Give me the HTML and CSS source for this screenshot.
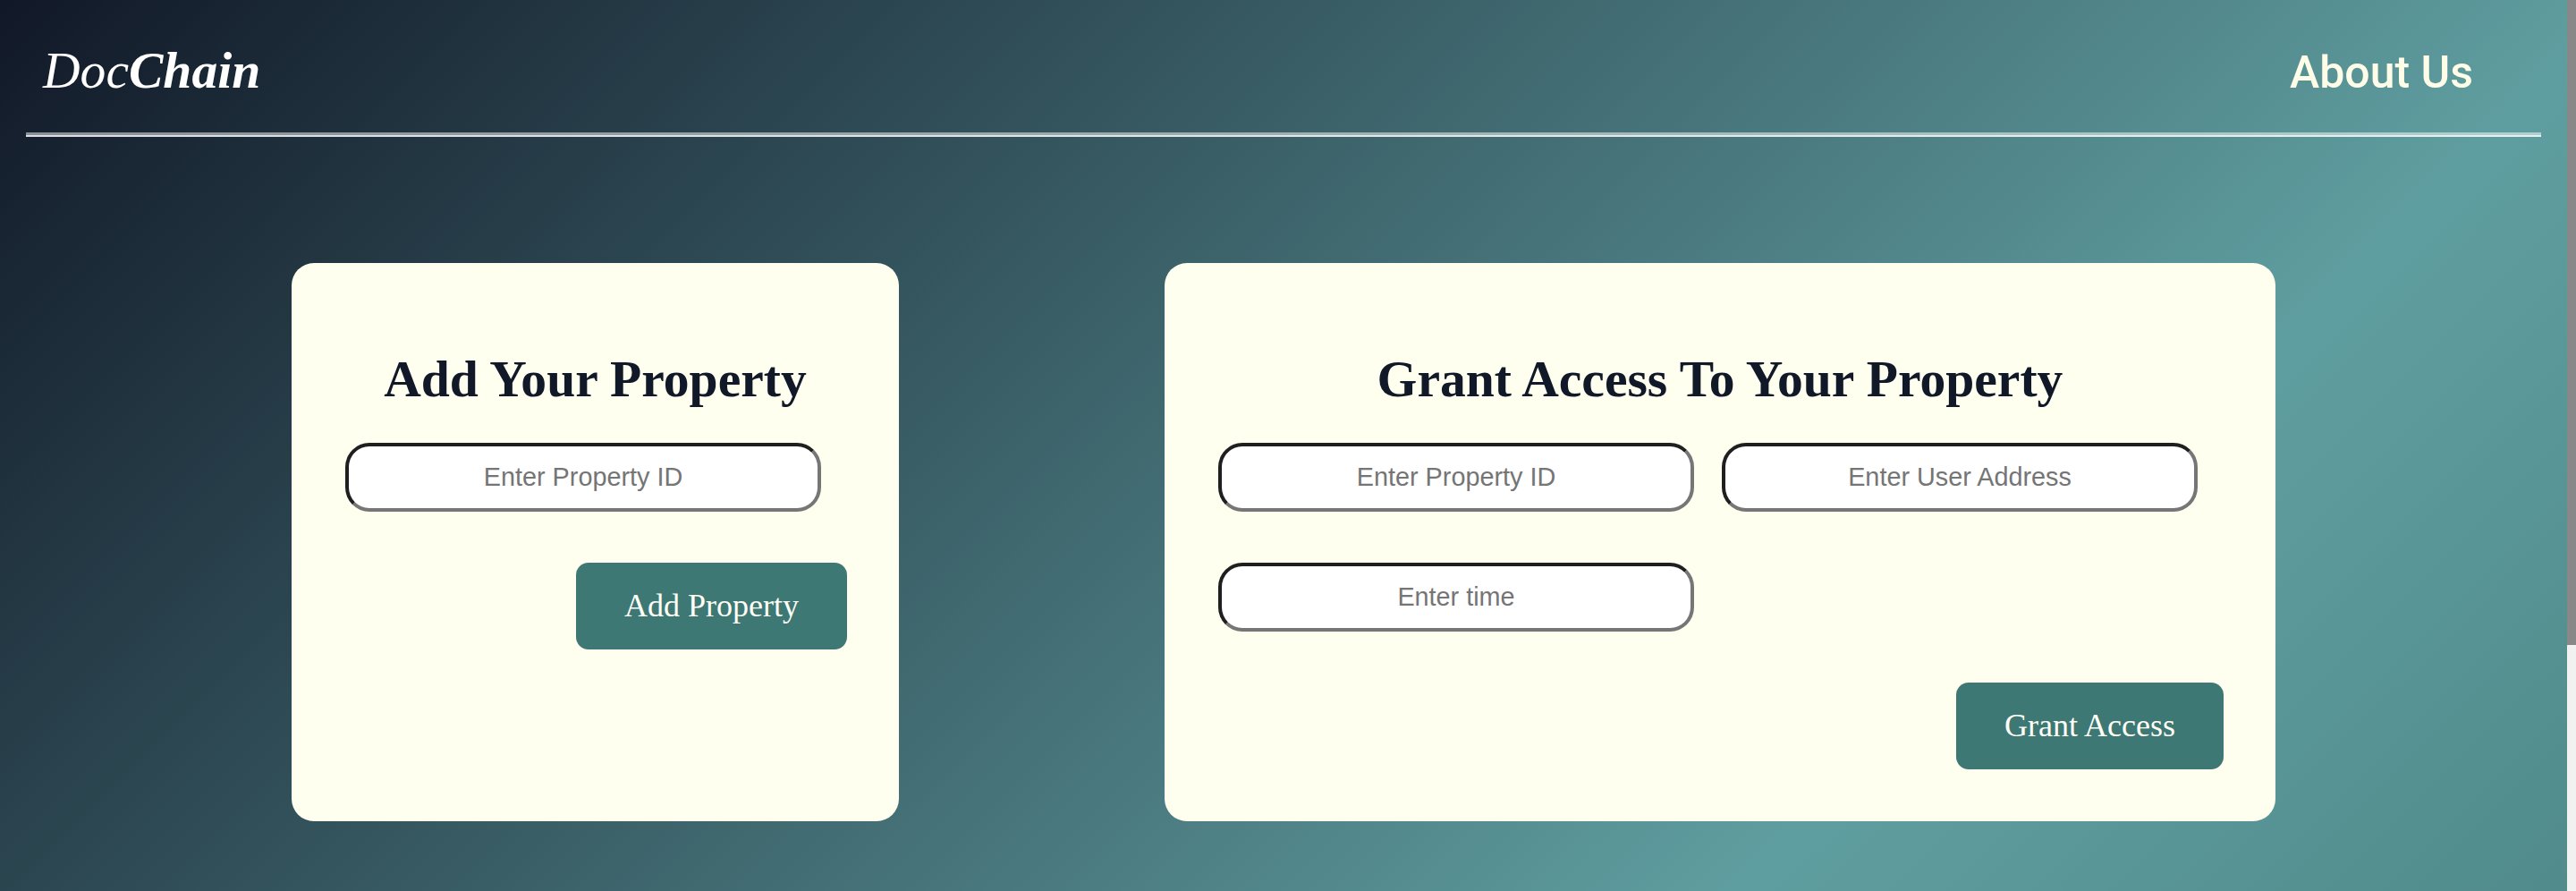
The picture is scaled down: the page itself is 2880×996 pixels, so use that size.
FILE: index.html
```html
<!DOCTYPE html>
<html lang="en">
<head>
<meta charset="utf-8">
<title>DocChain</title>
<link rel="stylesheet" href="styles.css">
</head>
<body>
<div class="window">
  <div class="viewport">
    <header class="nav">
      <h1 class="logo"><span class="logo-doc">Doc</span>Chain</h1>
      <a class="nav-link" href="#">About Us</a>
    </header>
    <hr class="divider">
    <main class="cards">
      <section class="card card-add">
        <h2 class="card-title">Add Your Property</h2>
        <div class="fields">
          <div class="field-row">
            <input class="field" type="text" placeholder="Enter Property ID">
          </div>
          <button class="action" type="button">Add Property</button>
        </div>
      </section>
      <section class="card card-grant">
        <h2 class="card-title">Grant Access To Your Property</h2>
        <div class="fields">
          <div class="field-row">
            <input class="field" type="text" placeholder="Enter Property ID">
            <input class="field" type="text" placeholder="Enter User Address">
          </div>
          <div class="field-row">
            <input class="field" type="text" placeholder="Enter time">
          </div>
          <button class="action" type="button">Grant Access</button>
        </div>
      </section>
    </main>
  </div>
  <div class="scrollbar"><div class="scroll-thumb"></div></div>
</div>
</body>
</html>
```

FILE: styles.css
```css
* { box-sizing: border-box; }

html, body {
  margin: 0;
  padding: 0;
}

body {
  font-family: "Liberation Serif", "Times New Roman", serif;
}

.window {
  display: flex;
  height: 996px;
  overflow: hidden;
}

.viewport {
  flex: 1;
  display: flex;
  flex-direction: column;
  background: linear-gradient(135deg, #111827 0%, #5f9ea0 76%, #518b8b 100%);
}

.scrollbar {
  width: 10px;
  flex: none;
  background: #f1f1f1;
}

.scroll-thumb {
  height: 721px;
  background: #888888;
}

.nav {
  display: flex;
  justify-content: space-between;
  align-items: baseline;
  padding: 45.6px 105px 0 48px;
}

.logo {
  margin: 0;
  font-family: "Liberation Serif", "Times New Roman", serif;
  font-size: 57.6px;
  line-height: 66px;
  font-style: italic;
  font-weight: 700;
  color: #ffffff;
}

.logo-doc {
  font-weight: 400;
}

.nav-link {
  font-family: Roboto, Inter, "Liberation Sans", sans-serif;
  font-size: 50px;
  font-weight: 500;
  color: #fffde8;
  text-decoration: none;
}

.divider {
  margin: 36.4px 29px 0;
  height: 0;
  border: 0;
  border-top: 3px solid rgba(255, 255, 255, 0.5);
  border-bottom: 2px solid rgba(255, 255, 255, 0.85);
}

.cards {
  display: flex;
  justify-content: center;
  align-items: stretch;
  gap: 297px;
  padding-top: 141px;
}

.card {
  display: flex;
  flex-direction: column;
  padding: 58px;
  background: #fffff0;
  border-radius: 25px;
}

.card-add { width: 679px; }
.card-grant { width: 1242px; }

.card-title {
  margin: 39px 0 38px;
  font-family: "Liberation Serif", "Times New Roman", serif;
  font-size: 57.6px;
  line-height: 66px;
  font-weight: 700;
  text-align: center;
  color: #111827;
}

.fields {
  display: flex;
  flex-direction: column;
  gap: 57px;
}

.field-row {
  display: flex;
  gap: 31px;
  padding-left: 2px;
}

.field {
  width: 532px;
  height: 77px;
  margin: 0;
  padding: 0 20px;
  border-style: solid;
  border-width: 4px;
  border-color: #1f1f1f #767676 #767676 #1f1f1f;
  border-radius: 27px;
  background: #ffffff;
  font-family: "Liberation Sans", Arial, sans-serif;
  font-size: 28.8px;
  color: #222;
  text-align: center;
  outline: none;
}

.field::placeholder {
  color: #757575;
  opacity: 1;
}

.action {
  align-self: flex-end;
  height: 97px;
  padding: 0 54px;
  margin: 0;
  border: 0;
  border-radius: 14px;
  background: #3e7874;
  color: #fffff6;
  font-family: "Liberation Serif", "Times New Roman", serif;
  font-size: 36px;
  line-height: 41px;
  cursor: pointer;
}
```
